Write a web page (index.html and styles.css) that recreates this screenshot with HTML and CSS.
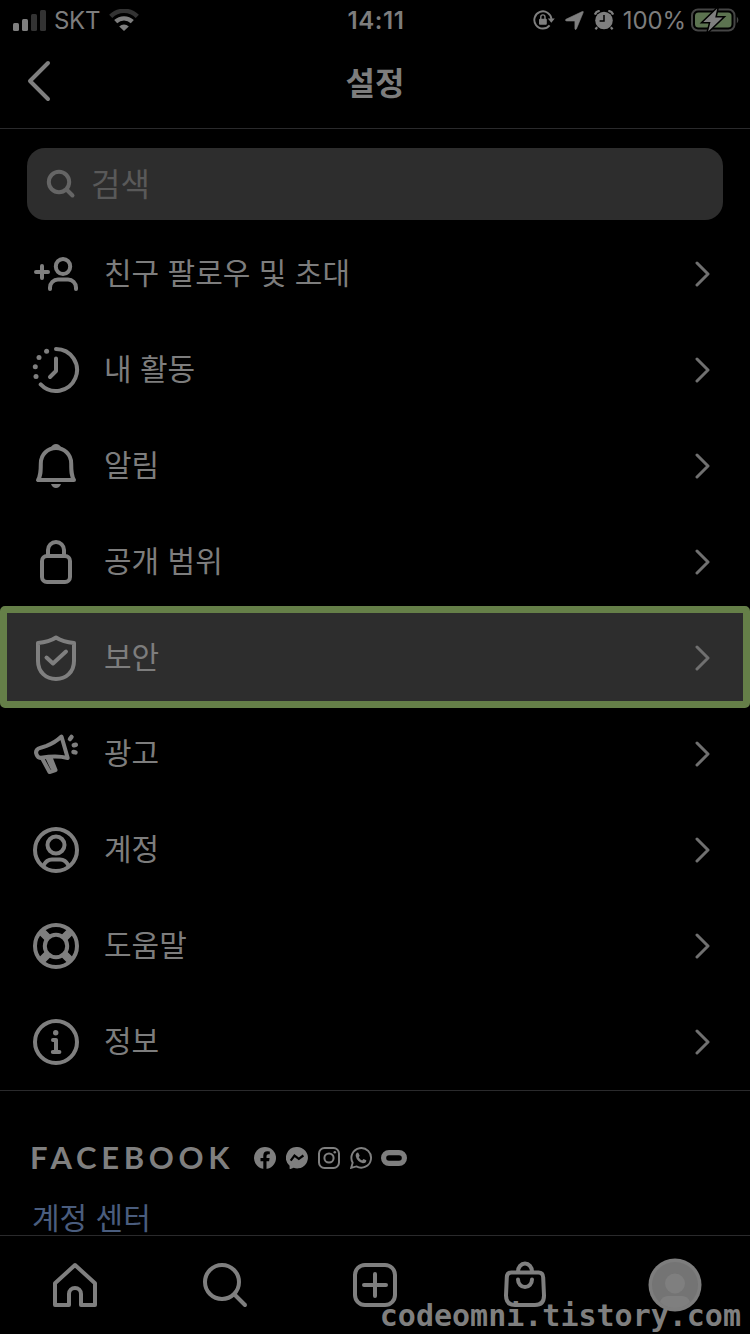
FILE: index.html
```html
<!DOCTYPE html>
<html lang="ko">
<head>
    <meta charset="UTF-8">
    <meta name="viewport" content="width=device-width, initial-scale=1.0">
    <title>설정</title>
    <link rel="stylesheet" href="styles.css">
</head>
<body>
    <div class="screen">
        <div class="status-bar">
            <div class="status-left">
                <svg class="signal" width="33" height="22" viewBox="0 0 33 22">
                    <rect x="0" y="14" width="6" height="8" rx="1.5" fill="#7f7f7f"/>
                    <rect x="9" y="10" width="6" height="12" rx="1.5" fill="#7f7f7f"/>
                    <rect x="18" y="5" width="6" height="17" rx="1.5" fill="#333"/>
                    <rect x="27" y="1" width="6" height="21" rx="1.5" fill="#333"/>
                </svg>
                <span class="carrier">SKT</span>
                <svg class="wifi" width="30" height="22" viewBox="0 0 30 22" fill="none">
                    <path d="M1.7 7.3a19 19 0 0 1 26.6 0" stroke="#333" stroke-width="4.5"/>
                    <path d="M6.7 12.7a12 12 0 0 1 16.6 0" stroke="#7f7f7f" stroke-width="4.4"/>
                    <path d="M10.2 17.4a7 7 0 0 1 9.6 0L15 22z" fill="#7f7f7f"/>
                </svg>
            </div>
            <span class="clock">14:11</span>
            <div class="status-right">
                <svg width="22" height="20" viewBox="0 0 22 20" fill="none">
                    <path d="M16.6 15.4a8.6 8.6 0 1 1 1.9-6.2" stroke="#7f7f7f" stroke-width="1.9"/>
                    <path d="M14.8 8.6h7l-3.5 4.2z" fill="#7f7f7f"/>
                    <rect x="6" y="8.8" width="7.8" height="6" rx="1" fill="#7f7f7f"/>
                    <path d="M7.8 9V7a2.1 2.1 0 0 1 4.2 0v2" stroke="#7f7f7f" stroke-width="1.4"/>
                </svg>
                <svg class="location" width="19" height="19" viewBox="0 0 19 19">
                    <path d="M1 8.2 17.2.6q1.6-.6 1 1L11.4 18q-1 1.6-1.5-.3V10H1.6q-2-.4-.6-1.8z" fill="#7f7f7f" stroke="#7f7f7f" stroke-width=".6"/>
                </svg>
                <svg class="alarm" width="20" height="20" viewBox="0 0 20 20">
                    <circle cx="10" cy="10.5" r="8.8" fill="#7f7f7f"/>
                    <path d="M.9 4.6Q2 1.2 5.7.9M19.1 4.6Q18 1.2 14.3.9M3.2 17.2 1.4 19.2M16.8 17.2l1.8 2" stroke="#7f7f7f" stroke-width="2.2" fill="none"/>
                    <path d="M10 5v6H5.6" stroke="#000" stroke-width="1.5" fill="none"/>
                </svg>
                <span class="percent">100%</span>
                <svg class="battery" width="48" height="24" viewBox="0 0 48 24">
                    <rect x="1" y="1.5" width="42.5" height="21" rx="6" fill="none" stroke="#454545" stroke-width="2"/>
                    <rect x="4" y="4.5" width="36.5" height="15" rx="3.5" fill="#5c7350"/>
                    <path d="M45.8 8.5q3.2 3.5 0 7z" fill="#454545"/>
                    <path d="M26.2.6 12.3 14h7.2l-2.4 9.4L31.6 9.6h-7.4z" fill="#7f7f7f" stroke="#000" stroke-width="3" paint-order="stroke"/>
                </svg>
            </div>
        </div>

        <header class="header">
            <svg class="back" width="24" height="42" viewBox="0 0 24 42">
                <path d="M21 3 3 21l18 18"/>
            </svg>
            <h1>설정</h1>
        </header>

        <main>
            <div class="search-box">
                <svg width="30" height="30" viewBox="0 0 30 30">
                    <circle cx="13" cy="13" r="10.2"/>
                    <path d="m20.5 20.5 6 6"/>
                </svg>
                <span>검색</span>
            </div>

            <ul class="menu">
                <li class="menu-item">
                    <svg class="icon" viewBox="0 0 48 48">
                        <path d="M10 16v12M4 22h12"/>
                        <ellipse cx="31" cy="16.5" rx="7.2" ry="7.5"/>
                        <path d="M18 39v-1.500a8 8 0 0 1 8-8h10a8 8 0 0 1 8 8V39"/>
                    </svg>
                    <span>친구 팔로우 및 초대</span>
                    <svg class="chevron" viewBox="0 0 16 28"><path d="m2 3 11 11L2 25"/></svg>
                </li>
                <li class="menu-item">
                    <svg class="icon" viewBox="0 0 48 48">
                        <path d="M24 3a21 21 0 1 1-15.300 35.400"/>
                        <path d="M24 12.500V25l-6 6"/>
                        <g class="solid">
                            <circle cx="14.600" cy="5.300" r="2.500"/>
                            <circle cx="7" cy="11.500" r="2.500"/>
                            <circle cx="3.300" cy="20.700" r="2.500"/>
                            <circle cx="4" cy="30.600" r="2.500"/>
                        </g>
                    </svg>
                    <span>내 활동</span>
                    <svg class="chevron" viewBox="0 0 16 28"><path d="m2 3 11 11L2 25"/></svg>
                </li>
                <li class="menu-item">
                    <svg class="icon" viewBox="0 0 48 48">
                        <path d="M6 38h36c-2.600-4-2.800-8-2.800-16.500C39.200 12 32 6 24 6S8.800 12 8.800 21.500C8.800 30 8.600 34 6 38z"/>
                        <path class="solid" d="M18.500 6q2-4 5.500-4t5.500 4zM19 42h10q-1.500 4-5 4t-5-4z"/>
                    </svg>
                    <span>알림</span>
                    <svg class="chevron" viewBox="0 0 16 28"><path d="m2 3 11 11L2 25"/></svg>
                </li>
                <li class="menu-item">
                    <svg class="icon" viewBox="0 0 48 48">
                        <rect x="10" y="18" width="28" height="26" rx="5"/>
                        <path d="M16 17v-5a8 8 0 0 1 16 0v5"/>
                    </svg>
                    <span>공개 범위</span>
                    <svg class="chevron" viewBox="0 0 16 28"><path d="m2 3 11 11L2 25"/></svg>
                </li>
                <li class="menu-item selected">
                    <svg class="icon" viewBox="0 0 48 48">
                        <path d="M24 3.500Q17 8 6 9v18c0 11 8 18 18 18s18-7 18-18V9Q31 8 24 3.500z"/>
                        <path d="m14.500 23.500 6.500 6L34 17.500"/>
                    </svg>
                    <span>보안</span>
                    <svg class="chevron" viewBox="0 0 16 28"><path d="m2 3 11 11L2 25"/></svg>
                </li>
                <li class="menu-item">
                    <svg class="icon" viewBox="0 0 48 48">
                        <path d="M29.500 6.500 35.700 28q-11-3-26.500-.2C5 28.500 2 21.500 6 18.800q2-1 8.500-3Q22.500 13 29.500 6.500z"/>
                        <path d="m10.500 29 7 13 6-2-5-12.500M16 29l4 8.500"/>
                        <path class="rays" d="m38 9 1.500-2M41.800 15.300l2-.5M41.500 22l2 .4"/>
                    </svg>
                    <span>광고</span>
                    <svg class="chevron" viewBox="0 0 16 28"><path d="m2 3 11 11L2 25"/></svg>
                </li>
                <li class="menu-item">
                    <svg class="icon" viewBox="0 0 48 48">
                        <circle cx="24" cy="24" r="21"/>
                        <circle cx="24" cy="19" r="8.500"/>
                        <path d="M11.500 39.500q3-6 8.500-6h8q5.500 0 8.500 6"/>
                    </svg>
                    <span>계정</span>
                    <svg class="chevron" viewBox="0 0 16 28"><path d="m2 3 11 11L2 25"/></svg>
                </li>
                <li class="menu-item">
                    <svg class="icon" viewBox="0 0 48 48">
                        <circle cx="24" cy="24" r="21"/>
                        <circle cx="24" cy="24" r="11.200"/>
                        <path class="spokes" d="m10 10 6 6M38 10l-6 6M10 38l6-6M38 38l-6-6"/>
                    </svg>
                    <span>도움말</span>
                    <svg class="chevron" viewBox="0 0 16 28"><path d="m2 3 11 11L2 25"/></svg>
                </li>
                <li class="menu-item">
                    <svg class="icon" viewBox="0 0 48 48">
                        <circle cx="24" cy="24" r="21"/>
                        <circle class="solid" cx="23.700" cy="14.800" r="2.700"/>
                        <path d="M21 22h3v12M20.800 34h6.600"/>
                    </svg>
                    <span>정보</span>
                    <svg class="chevron" viewBox="0 0 16 28"><path d="m2 3 11 11L2 25"/></svg>
                </li>
            </ul>

            <section class="facebook">
                <div class="brand">
                    <span class="brand-name">FACEBOOK</span>
                    <div class="brand-icons">
                        <svg width="22" height="22" viewBox="0 0 22 22">
                            <circle cx="11" cy="11" r="11" fill="#7f7f7f"/>
                            <path d="M9.300 22v-7.800H6.500V11h2.800V8.600q0-4.300 4.100-4.300 1.300 0 2.400.2v2.700h-1.400q-1.900 0-1.900 1.900V11h3.100l-.5 3.200h-2.600V22z" fill="#000"/>
                        </svg>
                        <svg width="22" height="22" viewBox="0 0 22 22">
                            <path d="M11 0a10.700 10.700 0 1 1-3.300 20.800L4.500 22q-.9.300-.9-.7v-2.600A10.700 10.700 0 0 1 11 0z" fill="#7f7f7f"/>
                            <path d="m4.700 13.600 3.800-5 4.300 3.300 4.600-3.400" fill="none" stroke="#000" stroke-width="2.200"/>
                        </svg>
                        <svg width="22" height="22" viewBox="0 0 22 22" fill="none" stroke="#7f7f7f" stroke-width="2">
                            <rect x="1" y="1" width="20" height="20" rx="5.500"/>
                            <circle cx="11" cy="11" r="4.600"/>
                            <circle cx="16.800" cy="5.200" r="1.300" fill="#7f7f7f" stroke="none"/>
                        </svg>
                        <svg width="22" height="22" viewBox="0 0 22 22">
                            <path d="M1.200 20.800 2.700 15.700A9.800 9.800 0 1 1 6.400 19.400z" fill="none" stroke="#7f7f7f" stroke-width="1.900"/>
                            <path d="M6.400 6.200q1-1 1.900-.5l1.400 3-1 1.500q1.200 2.300 3.400 3.200l1.400-1.500 2.800 1.400q.2 3-3.300 3Q7 14.700 5.700 9q-.2-1.700.7-2.800z" fill="#7f7f7f"/>
                        </svg>
                        <svg class="oculus" width="26" height="16" viewBox="0 0 26 16">
                            <rect x="2.600" y="2.600" width="20.800" height="10.800" rx="5.400" fill="none" stroke="#7f7f7f" stroke-width="5.200"/>
                        </svg>
                    </div>
                </div>
                <a class="account-center" href="#">계정 센터</a>
            </section>
        </main>

        <nav class="tab-bar">
            <svg class="home" viewBox="0 0 48 48">
                <path d="M4 44V22.300L24 4l20 18.300V44H30V33a6 6 0 0 0-12 0v11z"/>
            </svg>
            <svg viewBox="0 0 48 48">
                <circle cx="21" cy="21" r="17"/>
                <path d="m33.500 33.500 10.500 10.500"/>
            </svg>
            <svg viewBox="0 0 48 48">
                <rect x="4" y="4" width="40" height="40" rx="10"/>
                <path d="M24 13v22M13 24h22"/>
            </svg>
            <svg viewBox="0 0 48 48">
                <path d="M10.500 11.500h27q4.500 0 4.700 5l.8 18q0 9.500-9 9.500H14q-9 0-9-9.500l.8-18q.2-5 4.700-5z"/>
                <path d="M17 10.500a7 8 0 0 1 14 0M17 18.500a7 7.500 0 0 0 14 0"/>
            </svg>
            <svg class="avatar" viewBox="0 0 54 54">
                <circle cx="27" cy="27" r="26.500" fill="#7d7d7d"/>
                <circle cx="27" cy="27" r="23" fill="#747474"/>
                <circle cx="27" cy="25.500" r="10" fill="#7f7f7f"/>
                <path d="M12 44q2-6 8-6h14q6 0 8 6-6 6-15 6t-15-6z" fill="#7f7f7f"/>
            </svg>
        </nav>

        <div class="watermark">codeomni.tistory.com</div>
    </div>
</body>
</html>
```
FILE: styles.css
```css
* {
    box-sizing: border-box;
}

body {
    margin: 0;
    background-color: #000;
    color: #7d7d7d;
    font-family: Inter, "Noto Sans CJK KR", sans-serif;
}

.screen {
    position: relative;
    display: flex;
    flex-direction: column;
    width: 750px;
    height: 1334px;
    overflow: hidden;
}

.status-bar {
    display: grid;
    grid-template-columns: 1fr auto 1fr;
    align-items: center;
    height: 40px;
    padding: 0 11px 0 13px;
    font-size: 24px;
    line-height: 38px;
}

.status-bar span {
    padding-top: 2px;
}

.status-left,
.status-right {
    display: flex;
    align-items: center;
}

.status-right {
    justify-content: flex-end;
}

.signal {
    margin-right: 8px;
}

.carrier {
    width: 46px;
    letter-spacing: -0.3px;
}

.wifi {
    margin-left: 9px;
}

.clock {
    font-weight: 600;
    letter-spacing: 0.6px;
}

.location {
    margin-left: 10px;
}

.alarm {
    margin-left: 10px;
}

.percent {
    margin-left: 9px;
    letter-spacing: -0.1px;
}

.battery {
    margin-left: 5px;
}

.header {
    display: grid;
    grid-template-columns: 1fr auto 1fr;
    align-items: center;
    height: 89px;
    padding: 0 27px;
    border-bottom: 1px solid #2a2a2c;
}

.back {
    margin-top: -6px;
    fill: none;
    stroke: #7f7f7f;
    stroke-width: 4;
    stroke-linecap: round;
    stroke-linejoin: round;
}

h1 {
    margin: 0 0 6px;
    font-family: "Noto Sans CJK KR", sans-serif;
    font-size: 32px;
    font-weight: 700;
    line-height: 40px;
}

main {
    flex: 1;
    min-height: 0;
}

.search-box {
    display: flex;
    align-items: center;
    gap: 15px;
    height: 72px;
    margin: 19px 27px 6px;
    padding-left: 19px;
    border-radius: 18px;
    background-color: #2d2d2d;
    color: #595959;
    font-family: "Noto Sans CJK KR", sans-serif;
    font-size: 32px;
    line-height: 40px;
}

.search-box svg {
    fill: none;
    stroke: #656565;
    stroke-width: 4;
    stroke-linecap: round;
}

.search-box span {
    padding-bottom: 5px;
}

.menu {
    margin: 0;
    padding: 0;
    list-style: none;
    border-bottom: 1px solid #2a2a2c;
}

.menu-item {
    position: relative;
    display: flex;
    align-items: center;
    height: 96px;
    padding: 0 39px 0 32px;
    font-family: "Noto Sans CJK KR", sans-serif;
    font-size: 30px;
    line-height: 40px;
}

.menu-item span {
    flex: 1;
    margin-left: 24px;
    padding-bottom: 6px;
}

.icon {
    width: 48px;
    height: 48px;
    fill: none;
    stroke: #7f7f7f;
    stroke-width: 4;
    stroke-linecap: round;
    stroke-linejoin: round;
}

.icon .solid {
    fill: #7f7f7f;
    stroke: none;
}

.icon .rays {
    stroke-width: 4.5;
}

.icon .spokes {
    stroke-width: 8;
    stroke-linecap: butt;
}

.chevron {
    width: 16px;
    height: 28px;
    fill: none;
    stroke: #707070;
    stroke-width: 3;
    stroke-linecap: round;
    stroke-linejoin: round;
}

.selected {
    z-index: 1;
}

/* frame is slightly taller than the row itself */
.selected::before {
    content: "";
    position: absolute;
    inset: -4px 0 -2px;
    z-index: -1;
    border: 7px solid #657f48;
    border-radius: 5px;
    background-color: #2d2d2d;
}

.facebook {
    padding: 52px 32px 0;
}

.brand {
    display: flex;
    align-items: center;
    height: 30px;
}

.brand-name {
    width: 224px;
    margin-left: -2px;
    font-family: Lato, sans-serif;
    font-size: 31px;
    font-weight: 700;
    line-height: 28px;
    padding-bottom: 2px;
    letter-spacing: 4.7px;
    color: #7f7f7f;
}

.brand-icons {
    display: flex;
    align-items: center;
    gap: 10px;
}

.oculus {
    margin-left: -1px;
}

.account-center {
    display: block;
    margin-top: 26px;
    color: #4a5d7e;
    font-family: "Noto Sans CJK KR", sans-serif;
    font-size: 30px;
    line-height: 34px;
    text-decoration: none;
}

.tab-bar {
    display: grid;
    grid-template-columns: repeat(5, 1fr);
    place-items: center;
    height: 99px;
    border-top: 1px solid #2a2a2c;
}

.tab-bar svg {
    width: 48px;
    height: 48px;
    fill: none;
    stroke: #7f7f7f;
    stroke-width: 4;
    stroke-linecap: round;
    stroke-linejoin: round;
}

.tab-bar .avatar {
    width: 54px;
    height: 54px;
    stroke: none;
}

.watermark {
    position: absolute;
    right: 9px;
    bottom: 0;
    color: #7f7f7f;
    font-family: "DejaVu Sans Mono", monospace;
    font-size: 30px;
    font-weight: 700;
    line-height: 36px;
}
```
